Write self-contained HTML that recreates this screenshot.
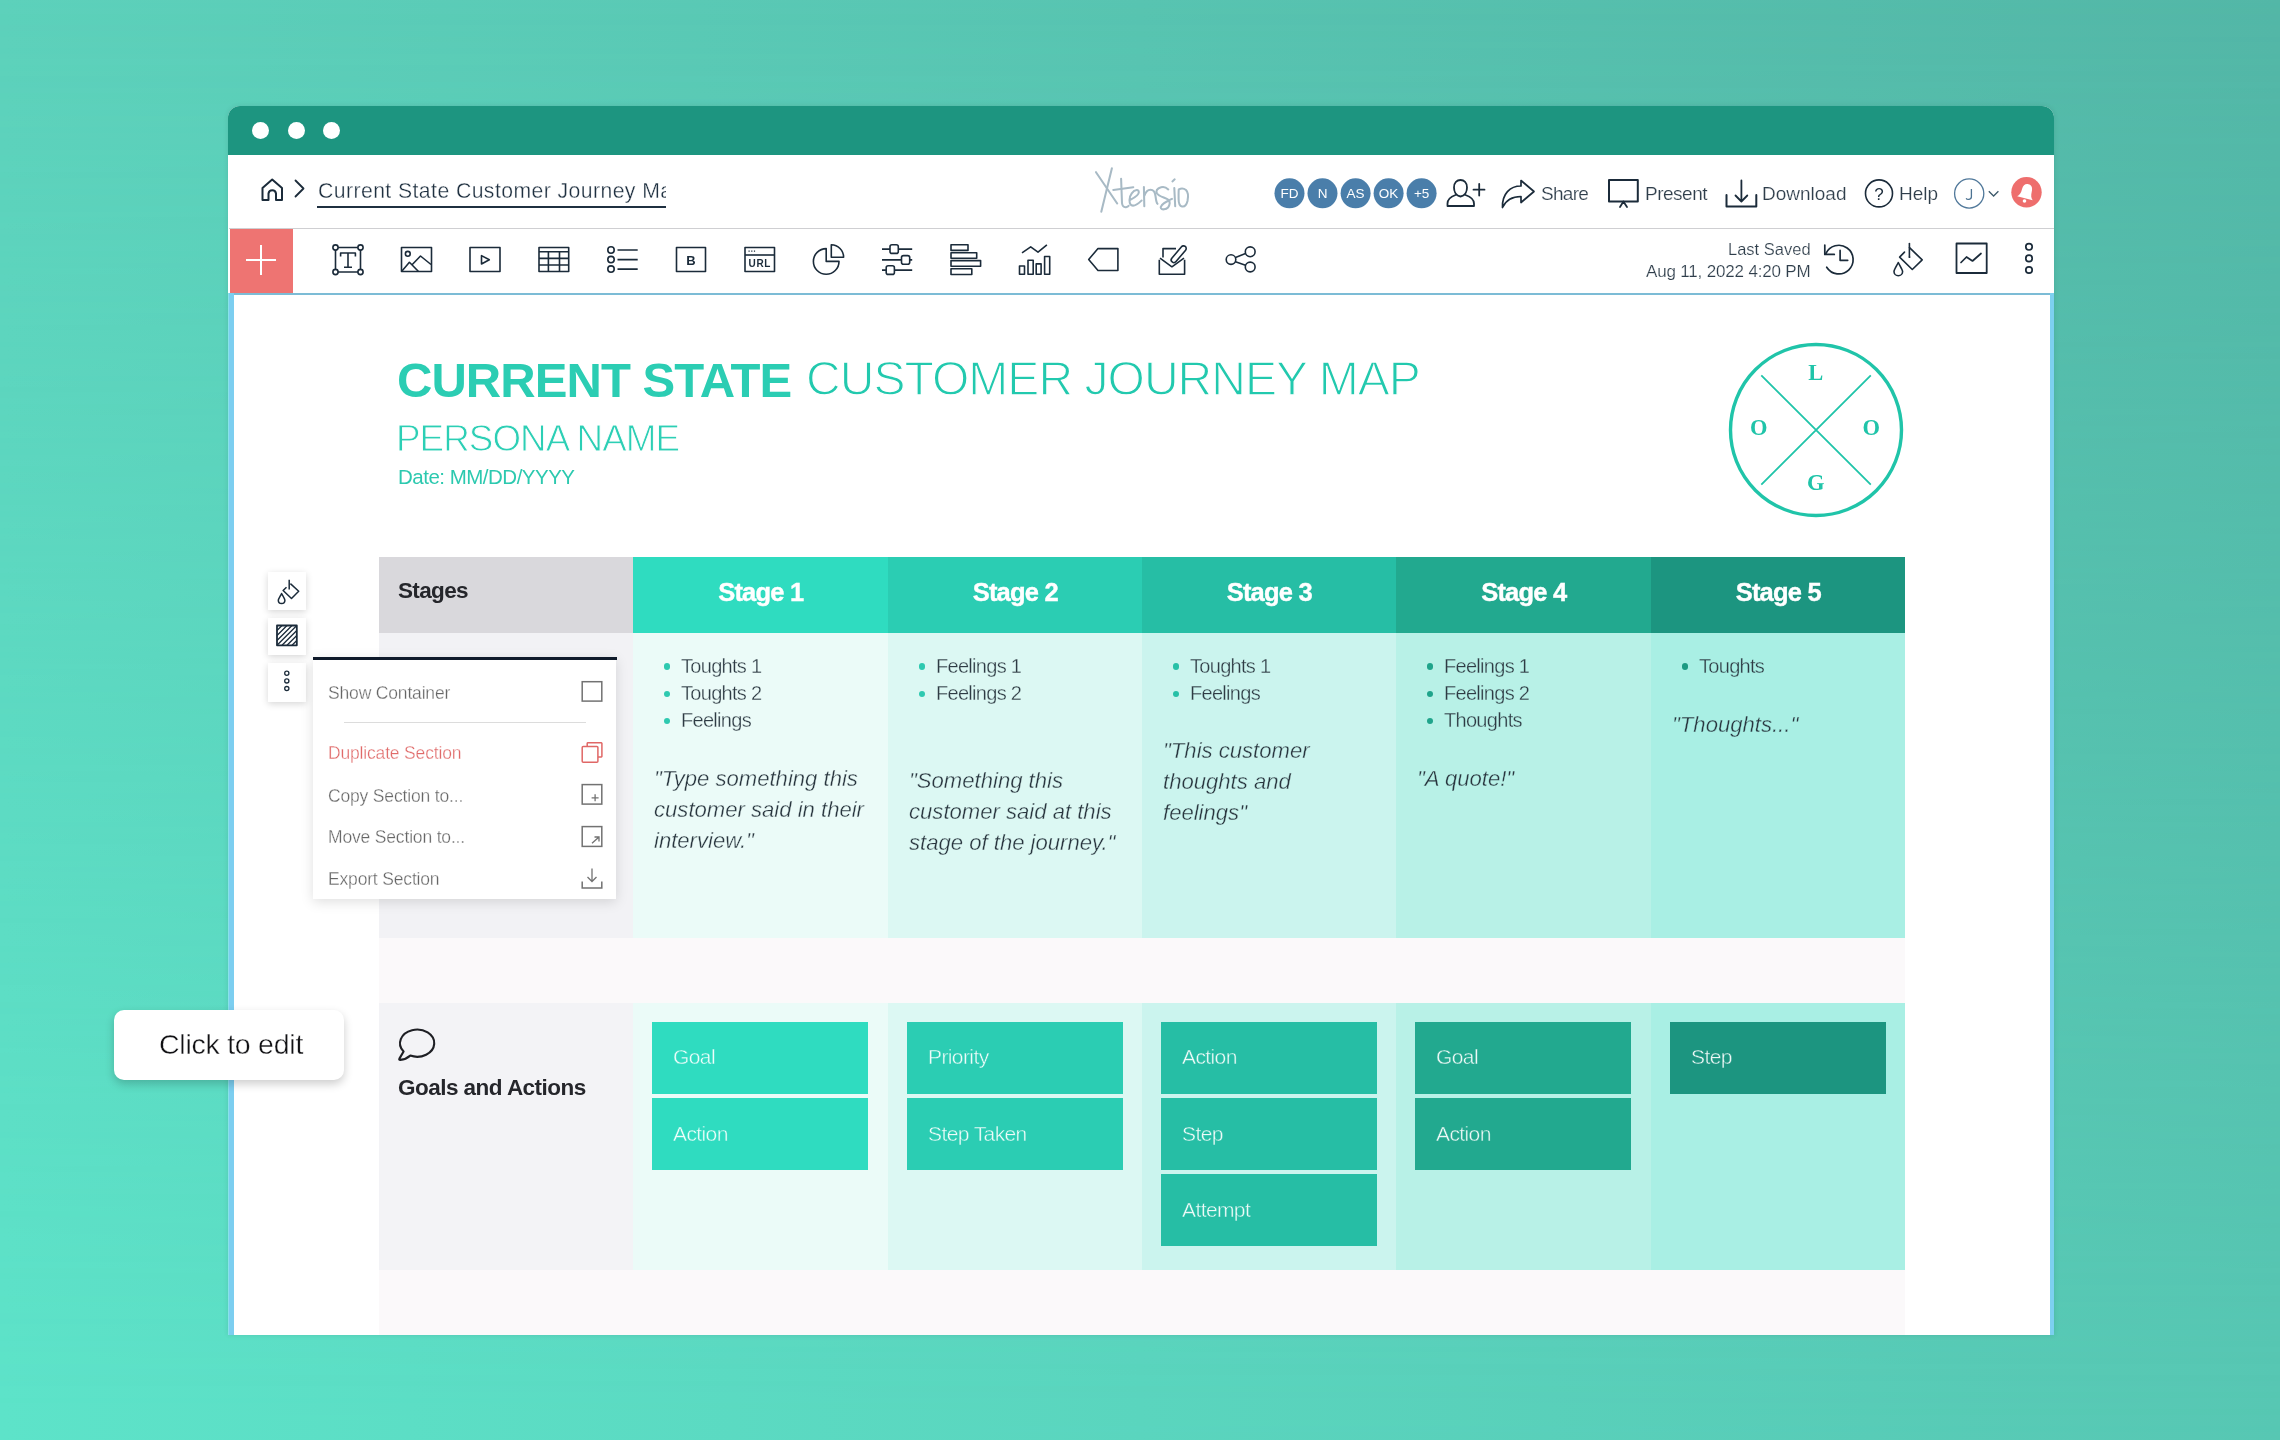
<!DOCTYPE html>
<html><head><meta charset="utf-8">
<style>
*{box-sizing:border-box;margin:0;padding:0}
html,body{width:2280px;height:1440px;overflow:hidden}
body{position:relative;font-family:"Liberation Sans",sans-serif;
background:linear-gradient(to right,#5dd1bb,#53b7a7);}
#bg2{left:0;top:0;width:2280px;height:1440px;background:linear-gradient(to right,#5de3c9,#57c7b3);-webkit-mask-image:linear-gradient(to bottom,transparent,#000);mask-image:linear-gradient(to bottom,transparent,#000)}
.a{position:absolute}
.t{position:absolute;white-space:nowrap;line-height:1;will-change:transform}
.qt{will-change:transform}
svg{position:absolute;overflow:visible;will-change:transform}
#win{left:228px;top:106px;width:1826px;height:1229px;background:#fff;border-radius:12px 12px 0 0;box-shadow:0 0 5px rgba(0,60,50,.12)}
#titlebar{left:228px;top:106px;width:1826px;height:49px;background:#1d9580;border-radius:12px 12px 0 0}
.dot{position:absolute;width:17px;height:17px;border-radius:50%;background:#fff;top:122px}
</style></head>
<body>
<div id="bg2" class="a"></div>
<div id="win" class="a"></div>
<div id="titlebar" class="a"></div>
<div class="dot" style="left:251.5px"></div>
<div class="dot" style="left:287.5px"></div>
<div class="dot" style="left:323px"></div>

<!-- header row -->
<div class="a" style="left:229px;top:228px;width:1825px;height:1px;background:#cfcfd2"></div>

<!-- toolbar -->
<div class="a" style="left:230px;top:229px;width:63px;height:64px;background:#ee7472"></div>
<div class="a" style="left:246px;top:259px;width:30px;height:2px;background:#fff"></div>
<div class="a" style="left:260px;top:245px;width:2px;height:30px;background:#fff"></div>

<!-- canvas selection border -->
<div class="a" style="left:229px;top:293px;width:1825px;height:2px;background:#7cbcd6"></div>
<div class="a" style="left:228px;top:293px;width:6px;height:1042px;background:linear-gradient(to right,#88e2ea 0,#88e2ea 1.2px,#7ccef0 1.2px)"></div>
<div class="a" style="left:2050px;top:293px;width:4px;height:1042px;background:#7dd0f0"></div>


<!-- breadcrumb -->
<svg style="left:0;top:0" width="2280" height="1440" viewBox="0 0 2280 1440">
<g fill="none" stroke="#1b2b3a" stroke-width="2" stroke-linejoin="round" stroke-linecap="round">
 <path d="M262.5 200 V188 L272.2 179.5 L282 188 V200 H276 V193.5 A3.8 3.8 0 0 0 268.5 193.5 V200 Z"/>
 <path d="M295.5 180.5 L303.5 188.5 L295.5 196.5" stroke-width="1.8"/>
</g>
</svg>
<div class="a" style="left:317px;top:174px;width:349px;height:30px;overflow:hidden">
 <div class="t" style="left:0.5px;top:5.75px;font-size:21.2px;letter-spacing:0.43px;color:#1f3040;-webkit-text-stroke:0.3px #fff">Current State Customer Journey Map</div>
</div>
<div class="a" style="left:317px;top:206.2px;width:349px;height:1.6px;background:#1f3040"></div>


<!-- Xtensio logo -->
<svg style="left:0;top:0" width="2280" height="1440" viewBox="0 0 2280 1440">
<g fill="none" stroke="#a8bac5" stroke-width="2.05" stroke-linecap="round" stroke-linejoin="round">
 <path d="M1096 172.2 L1117.2 203.5"/>
 <path d="M1111.9 168.3 L1101.3 211.8"/>
 <path d="M1121.1 178.7 L1122 203 C1122.3 206 1124 207.4 1126 207.2 C1127.5 207 1128.3 206.4 1128.7 205.8"/>
 <path d="M1113.3 189.9 L1133.3 187.2"/>
 <path d="M1130.3 199.8 C1134 198 1138.8 195 1138.8 192.3 C1138.8 190.5 1137.8 190 1136.8 190.1 C1133 190.5 1129.5 195 1129.5 200 C1129.5 204 1131 205.6 1133 205.6 C1136.5 205.6 1139.5 202.5 1141.6 200.5"/>
 <path d="M1143.9 187 L1144.3 206.3 M1144.3 196 C1145.5 192 1148 189.7 1150.5 189.7 C1153.5 189.7 1155 192 1155.5 196 C1156 200 1156.5 203 1157.5 203.8"/>
 <path d="M1168.3 189.4 C1166 187.2 1163 186.6 1161 187.3 C1157 188.5 1155.5 191 1157 193.5 C1159 196.5 1165 197.5 1168 199.5 C1170.5 201.5 1170 205 1168 207.5 C1166 209.6 1162 210 1161 208.3 C1160 206.5 1163 203.5 1166 202 C1168.5 200.7 1170.5 199.7 1172 198.9"/>
 <path d="M1172.4 181.4 L1174.7 179.3" stroke-width="2"/>
 <path d="M1174.3 188 L1175.2 206.3"/>
 <path d="M1178.8 189.5 C1181 188.3 1184 188.5 1186 190 C1188 192 1188.3 197 1187.5 201 C1186.5 205 1184.5 207 1182 206.5 C1179.5 206 1178.6 203 1178.6 199 C1178.6 195 1178.5 191 1178.8 189.5"/>
</g>
<!-- avatars -->
<g fill="#4a7eaa">
 <circle cx="1289.5" cy="193.3" r="15"/>
 <circle cx="1322.5" cy="193.3" r="15"/>
 <circle cx="1355.6" cy="193.3" r="15"/>
 <circle cx="1388.6" cy="193.3" r="15"/>
 <circle cx="1421.6" cy="193.3" r="15"/>
</g>
<g fill="#fff" font-family="Liberation Sans" font-size="13.5" text-anchor="middle">
 <text x="1289.5" y="198.2">FD</text>
 <text x="1322.5" y="198.2">N</text>
 <text x="1355.6" y="198.2">AS</text>
 <text x="1388.6" y="198.2">OK</text>
 <text x="1421.6" y="198.2">+5</text>
</g>
<g fill="none" stroke="#1b2b3a" stroke-width="1.8" stroke-linecap="round" stroke-linejoin="round">
 <!-- add user -->
 <path d="M1460.5 196.5 C1455 195.5 1454 190 1454 187.5 C1454 182.5 1457 180 1460.5 180 C1464 180 1467 182.5 1467 187.5 C1467 190 1466 195.5 1460.5 196.5"/>
 <path d="M1455.5 195 C1450 197 1447.5 200.5 1447.5 203.5 V206 H1474 V203.5 C1474 200.5 1471 197 1465.5 195"/>
 <path d="M1479.2 184 V195.5 M1473.5 189.7 H1484.5"/>
 <!-- share arrow -->
 <path d="M1521 180.5 L1534 191.5 L1521 202.5 V196.5 C1512 196.5 1506 200 1502.5 207.5 C1502 194 1510 186 1521 186 Z" stroke-width="1.7"/>
 <!-- present -->
 <rect x="1609" y="180" width="28.8" height="21.5" stroke-width="2"/>
 <path d="M1620 207 L1623.4 201.5 L1627 207" stroke-width="1.8"/>
 <!-- download -->
 <path d="M1726.5 195 V206.5 H1756.3 V195" stroke-width="2"/>
 <path d="M1741.4 180.5 V201 M1735.5 195.5 L1741.4 201.5 L1747.3 195.5" stroke-width="1.8"/>
 <!-- help -->
 <circle cx="1879" cy="193.4" r="13.5" stroke-width="1.6"/>
</g>
<text x="1879" y="199.5" font-family="Liberation Sans" font-size="17" fill="#1b2b3a" text-anchor="middle">?</text>
<!-- J -->
<circle cx="1969.2" cy="193.5" r="14.6" fill="none" stroke="#50789a" stroke-width="1.3"/>
<path d="M1971.4 189 V196.8 C1971.4 199.8 1967 200.2 1966.2 198.2" fill="none" stroke="#4d7392" stroke-width="1.3"/>
<path d="M1988.8 191.2 L1993.6 196 L1998.4 191.2" fill="none" stroke="#3e5a6c" stroke-width="1.3"/>
<!-- bell -->
<circle cx="2026.5" cy="192.3" r="15.2" fill="#ee6e6d"/>
<path d="M2018.5 198.5 C2020.5 197 2021.5 194.5 2021.5 190 C2021.5 186 2023.5 184 2026.5 184 C2029.5 184 2031.5 186 2031.5 190 C2031.5 194.5 2032.5 197 2034.5 198.5 Z" fill="#fff" transform="rotate(14 2026.5 192)"/>
<circle cx="2024.5" cy="201" r="1.8" fill="#fff"/>
</svg>
<div class="t" style="left:1540.5px;top:184.2px;font-size:19px;letter-spacing:-0.7px;color:#2f3e4b;-webkit-text-stroke:0.2px #fff">Share</div>
<div class="t" style="left:1645px;top:184.2px;font-size:19px;letter-spacing:-0.5px;color:#2f3e4b;-webkit-text-stroke:0.2px #fff">Present</div>
<div class="t" style="left:1761.5px;top:184.2px;font-size:19px;color:#2f3e4b;-webkit-text-stroke:0.2px #fff">Download</div>
<div class="t" style="left:1899px;top:184.2px;font-size:19px;color:#2f3e4b;-webkit-text-stroke:0.2px #fff">Help</div>


<!-- toolbar icons -->
<svg style="left:0;top:0" width="2280" height="1440" viewBox="0 0 2280 1440">
<g fill="none" stroke="#1b2b3a" stroke-width="1.6" stroke-linejoin="round">
 <!-- T -->
 <rect x="335.5" y="247.5" width="25" height="24.5"/>
 <g fill="#fff" stroke-width="1.6"><circle cx="335.5" cy="247.5" r="2.6"/><circle cx="360.5" cy="247.5" r="2.6"/><circle cx="335.5" cy="272" r="2.6"/><circle cx="360.5" cy="272" r="2.6"/></g>
 <path d="M340.6 256.5 V253 H355.4 V256.5 M348 253 V267.2 M344 267.2 H352" stroke-width="1.6"/>
 <!-- image -->
 <rect x="401.5" y="247.5" width="30" height="24"/>
 <circle cx="407.8" cy="253.8" r="2.4" stroke-width="1.6"/>
 <path d="M402 271 L409.4 262.3 L418.5 271.5 M412.3 264.5 L420.5 256 L431 264.5" stroke-width="1.6"/>
 <!-- video -->
 <rect x="470" y="247.5" width="30" height="24"/>
 <path d="M481.5 255.6 V264 L489.3 259.8 Z" stroke-width="1.6"/>
 <!-- table -->
 <rect x="539" y="247.5" width="29.7" height="24"/>
 <path d="M539 251.8 H568.7 M539 258.4 H568.7 M539 265 H568.7 M548.4 251.8 V271.5 M559.5 251.8 V271.5" stroke-width="1.6"/>
 <!-- list -->
 <circle cx="611" cy="250" r="3.2" stroke-width="1.6"/><circle cx="611" cy="259.6" r="3.2" stroke-width="1.6"/><circle cx="611" cy="269.1" r="3.2" stroke-width="1.6"/>
 <path d="M617.5 250 H637.7 M617.5 259.6 H637.7 M617.5 269.1 H637.7" stroke-width="1.6"/>
 <!-- B -->
 <rect x="676.5" y="247.5" width="29" height="24"/>
 <!-- URL -->
 <rect x="745" y="247.5" width="29.5" height="24"/>
 <path d="M745 255 H774.5" stroke-width="1.6"/>
 <path d="M748.5 251.2 H749.7 M751.2 251.2 H752.4 M753.9 251.2 H755.1" stroke-width="1.2"/>
 <!-- pie -->
 <path d="M826.2 248.6 A12.8 12.8 0 1 0 839 261.4 H826.2 Z" stroke-width="1.6"/>
 <path d="M831.3 244.8 A12.4 12.4 0 0 1 843.6 257.2 H831.3 Z" stroke-width="1.6"/>
 <!-- sliders -->
 <path d="M882 249.1 H890 M898.3 249.1 H912.2 M882 259.9 H901.5 M909.7 259.9 H912.2 M882 270.2 H886.2 M894.4 270.2 H912.2" stroke-width="1.75"/>
 <rect x="890" y="244.8" width="8.3" height="8.6" rx="2" stroke-width="1.6"/>
 <rect x="901.5" y="255.6" width="8.2" height="8.6" rx="2" stroke-width="1.6"/>
 <rect x="886.2" y="265.8" width="8.2" height="8.6" rx="2" stroke-width="1.6"/>
 <!-- bars -->
 <rect x="951" y="244.8" width="17" height="5.6" stroke-width="1.6"/>
 <rect x="951" y="252.8" width="25.7" height="5.5" stroke-width="1.6"/>
 <rect x="951" y="260.6" width="29.6" height="5.7" stroke-width="1.6"/>
 <rect x="951" y="268.8" width="20.8" height="5.7" stroke-width="1.6"/>
 <!-- chart -->
 <rect x="1019.5" y="266" width="5" height="8.3" stroke-width="1.6"/>
 <rect x="1028" y="260.2" width="5.2" height="14.1" stroke-width="1.6"/>
 <rect x="1036.2" y="263.9" width="4.9" height="10.4" stroke-width="1.6"/>
 <rect x="1044.6" y="256.5" width="5.1" height="17.8" stroke-width="1.6"/>
 <path d="M1022 252.8 L1030.7 246.9 L1038 252.2 L1046.9 244.8" stroke-width="1.6"/>
 <!-- tag -->
 <path d="M1088.7 259.6 L1098 248.6 H1117.9 V270.5 H1098 Z"/>
 <!-- email -->
 <path d="M1163 257.5 V248.6 H1176"/>
 <path d="M1159.3 259.8 V274.2 H1184.6 V259.8"/>
 <path d="M1160 258.2 L1171.9 266.8 L1184 258.2" stroke-width="1.6"/>
 <path d="M1171.8 258.2 L1181.5 246.8 A2.6 2.6 0 0 1 1185.6 250.2 L1176 261.6 A2.6 2.6 0 0 1 1171.8 258.2 Z" stroke-width="1.6"/>
 <!-- share -->
 <circle cx="1231" cy="259.6" r="4.8" stroke-width="1.6"/>
 <circle cx="1250.2" cy="251.8" r="4.9" stroke-width="1.6"/>
 <circle cx="1250.2" cy="267" r="4.9" stroke-width="1.6"/>
 <path d="M1235.5 257.6 L1245.5 253.6 M1235.5 261.8 L1245.5 265.2" stroke-width="1.6"/>
</g>
<text x="691" y="264.8" font-family="Liberation Sans" font-weight="bold" font-size="13" fill="#1b2b3a" text-anchor="middle">B</text>
<text x="759.8" y="267.4" font-family="Liberation Sans" font-weight="bold" font-size="10" fill="#1b2b3a" text-anchor="middle" letter-spacing="0.6">URL</text>
</svg>


<!-- right toolbar -->
<div class="t" style="right:469.5px;top:240.9px;font-size:16.5px;color:#2f3e4b;-webkit-text-stroke:0.2px #fff">Last Saved</div>
<div class="t" style="right:469.5px;top:262.5px;font-size:17px;letter-spacing:-0.17px;color:#2f3e4b;-webkit-text-stroke:0.2px #fff">Aug 11, 2022 4:20 PM</div>
<svg style="left:0;top:0" width="2280" height="1440" viewBox="0 0 2280 1440">
<g fill="none" stroke="#1b2b3a" stroke-width="1.8" stroke-linejoin="round" stroke-linecap="round">
 <!-- history -->
 <path d="M1826.7 267.2 A14.3 14.3 0 1 0 1825.8 253.7" stroke-width="1.7"/>
 <path d="M1824.8 245 V254.4 H1834.3" stroke-width="1.7"/>
 <path d="M1840.1 250.4 V260.3 H1847.7" stroke-width="1.7"/>
 <!-- paint bucket -->
 <path d="M1904.5 252.1 L1899.6 257.1 L1912.3 269.5 L1922.2 259.9 L1909.5 247.6" stroke-width="1.6"/>
 <path d="M1909.4 243.5 V257" stroke-width="1.6"/>
 <circle cx="1909.5" cy="257.2" r="0.9" fill="#1b2b3a" stroke="none"/>
 <path d="M1898.3 262.5 C1896.5 266 1894 270 1894 271.5 A4.3 4.3 0 0 0 1902.6 271.5 C1902.6 270 1900 266 1898.3 262.5 Z" stroke-width="1.6"/>
 <!-- chart box -->
 <rect x="1956.5" y="243.5" width="30.2" height="29.5" stroke-width="1.8"/>
 <path d="M1961 262.5 L1966.5 257 L1972.5 261 L1981 253.5" stroke-width="1.7"/>
 <!-- dots -->
 <circle cx="2029" cy="246.8" r="3.2" stroke-width="1.7"/>
 <circle cx="2029" cy="258.4" r="3.2" stroke-width="1.7"/>
 <circle cx="2029" cy="270" r="3.2" stroke-width="1.7"/>
</g>
</svg>

<!-- ===== CANVAS ===== -->
<div class="t" style="left:397px;top:356.0px;font-size:49px;font-weight:bold;letter-spacing:-0.95px;color:#2bcdb3">CURRENT STATE</div>
<div class="t" style="left:805.5px;top:355.4px;font-size:48px;letter-spacing:-0.96px;color:#22c9ae;-webkit-text-stroke:1.3px #fff">CUSTOMER JOURNEY MAP</div>
<div class="t" style="left:396px;top:421.1px;font-size:36.8px;letter-spacing:-0.95px;color:#2ccfb5;-webkit-text-stroke:0.9px #fff">PERSONA NAME</div>
<div class="t" style="left:398px;top:466.6px;font-size:20.5px;letter-spacing:-0.5px;color:#2cc9af">Date: MM/DD/YYYY</div>
<svg style="left:0;top:0" width="2280" height="1440" viewBox="0 0 2280 1440">
<circle cx="1816" cy="430" r="85.5" fill="none" stroke="#20c4a9" stroke-width="3.4"/>
<path d="M1761.3 375.3 L1870.8 484.7 M1870.8 375.3 L1761.3 484.7" stroke="#20c4a9" stroke-width="1.8"/>
<g font-family="Liberation Serif" font-weight="bold" font-size="22.5" fill="#20c4a9" text-anchor="middle">
<text x="1815.8" y="379.5">L</text><text x="1758.8" y="434.5">O</text><text x="1871.3" y="434.5">O</text><text x="1815.8" y="490">G</text>
</g></svg>
<div class="a" style="left:379px;top:557px;width:254px;height:76px;background:#d9d8dc"></div>
<div class="a" style="left:379px;top:633px;width:254px;height:305px;background:#f2f2f5"></div>
<div class="a" style="left:379px;top:938px;width:1526px;height:64.5px;background:#fbf9fa"></div>
<div class="a" style="left:379px;top:1002.5px;width:254px;height:267px;background:#f3f3f6"></div>
<div class="a" style="left:379px;top:1269.5px;width:1526px;height:65.5px;background:#fbf9fa"></div>
<div class="a" style="left:633px;top:557px;width:255px;height:76px;background:#2fdcc0"></div>
<div class="a" style="left:633px;top:633px;width:255px;height:305px;background:#ebfbf8"></div>
<div class="a" style="left:633px;top:1002.5px;width:255px;height:267px;background:#ebfbf8"></div>
<div class="a" style="left:888px;top:557px;width:254px;height:76px;background:#2bcdb3"></div>
<div class="a" style="left:888px;top:633px;width:254px;height:305px;background:#dcf8f3"></div>
<div class="a" style="left:888px;top:1002.5px;width:254px;height:267px;background:#dcf8f3"></div>
<div class="a" style="left:1142px;top:557px;width:254px;height:76px;background:#26bea5"></div>
<div class="a" style="left:1142px;top:633px;width:254px;height:305px;background:#cbf4ee"></div>
<div class="a" style="left:1142px;top:1002.5px;width:254px;height:267px;background:#cbf4ee"></div>
<div class="a" style="left:1396px;top:557px;width:255px;height:76px;background:#22a98f"></div>
<div class="a" style="left:1396px;top:633px;width:255px;height:305px;background:#b8f1e7"></div>
<div class="a" style="left:1396px;top:1002.5px;width:255px;height:267px;background:#b8f1e7"></div>
<div class="a" style="left:1651px;top:557px;width:254px;height:76px;background:#1c9580"></div>
<div class="a" style="left:1651px;top:633px;width:254px;height:305px;background:#a9efe4"></div>
<div class="a" style="left:1651px;top:1002.5px;width:254px;height:267px;background:#a9efe4"></div>
<div class="t" style="left:398px;top:580.0px;font-size:22.5px;font-weight:bold;letter-spacing:-0.64px;color:#25262b">Stages</div>
<div class="t" style="left:633px;width:255px;text-align:center;top:579.7px;font-size:25.5px;font-weight:bold;letter-spacing:-0.8px;text-indent:0.5px;color:#fff;-webkit-text-stroke:0.4px #fff">Stage 1</div>
<div class="t" style="left:888px;width:254px;text-align:center;top:579.7px;font-size:25.5px;font-weight:bold;letter-spacing:-0.8px;text-indent:0.5px;color:#fff;-webkit-text-stroke:0.4px #fff">Stage 2</div>
<div class="t" style="left:1142px;width:254px;text-align:center;top:579.7px;font-size:25.5px;font-weight:bold;letter-spacing:-0.8px;text-indent:0.5px;color:#fff;-webkit-text-stroke:0.4px #fff">Stage 3</div>
<div class="t" style="left:1396px;width:255px;text-align:center;top:579.7px;font-size:25.5px;font-weight:bold;letter-spacing:-0.8px;text-indent:0.5px;color:#fff;-webkit-text-stroke:0.4px #fff">Stage 4</div>
<div class="t" style="left:1651px;width:254px;text-align:center;top:579.7px;font-size:25.5px;font-weight:bold;letter-spacing:-0.8px;text-indent:0.5px;color:#fff;-webkit-text-stroke:0.4px #fff">Stage 5</div>
<div class="a" style="left:663.7px;top:663.4px;width:6.6px;height:6.6px;border-radius:50%;background:#2ec9b0"></div>
<div class="t bt" style="left:680.5px;top:655.8px;font-size:20px;letter-spacing:-0.7px;color:#2e3b44;-webkit-text-stroke:0.3px #ebfbf8">Toughts 1</div>
<div class="a" style="left:663.7px;top:690.6px;width:6.6px;height:6.6px;border-radius:50%;background:#2ec9b0"></div>
<div class="t bt" style="left:680.5px;top:683.0px;font-size:20px;letter-spacing:-0.7px;color:#2e3b44;-webkit-text-stroke:0.3px #ebfbf8">Toughts 2</div>
<div class="a" style="left:663.7px;top:717.8px;width:6.6px;height:6.6px;border-radius:50%;background:#2ec9b0"></div>
<div class="t bt" style="left:680.5px;top:710.2px;font-size:20px;letter-spacing:-0.7px;color:#2e3b44;-webkit-text-stroke:0.3px #ebfbf8">Feelings</div>
<div class="a" style="left:918.7px;top:663.4px;width:6.6px;height:6.6px;border-radius:50%;background:#2ec9b0"></div>
<div class="t bt" style="left:935.5px;top:655.8px;font-size:20px;letter-spacing:-0.7px;color:#2e3b44;-webkit-text-stroke:0.3px #dcf8f3">Feelings 1</div>
<div class="a" style="left:918.7px;top:690.6px;width:6.6px;height:6.6px;border-radius:50%;background:#2ec9b0"></div>
<div class="t bt" style="left:935.5px;top:683.0px;font-size:20px;letter-spacing:-0.7px;color:#2e3b44;-webkit-text-stroke:0.3px #dcf8f3">Feelings 2</div>
<div class="a" style="left:1172.7px;top:663.4px;width:6.6px;height:6.6px;border-radius:50%;background:#27c0a7"></div>
<div class="t bt" style="left:1189.5px;top:655.8px;font-size:20px;letter-spacing:-0.7px;color:#2e3b44;-webkit-text-stroke:0.3px #cbf4ee">Toughts 1</div>
<div class="a" style="left:1172.7px;top:690.6px;width:6.6px;height:6.6px;border-radius:50%;background:#27c0a7"></div>
<div class="t bt" style="left:1189.5px;top:683.0px;font-size:20px;letter-spacing:-0.7px;color:#2e3b44;-webkit-text-stroke:0.3px #cbf4ee">Feelings</div>
<div class="a" style="left:1426.7px;top:663.4px;width:6.6px;height:6.6px;border-radius:50%;background:#1fa48b"></div>
<div class="t bt" style="left:1443.5px;top:655.8px;font-size:20px;letter-spacing:-0.7px;color:#2e3b44;-webkit-text-stroke:0.3px #b8f1e7">Feelings 1</div>
<div class="a" style="left:1426.7px;top:690.6px;width:6.6px;height:6.6px;border-radius:50%;background:#1fa48b"></div>
<div class="t bt" style="left:1443.5px;top:683.0px;font-size:20px;letter-spacing:-0.7px;color:#2e3b44;-webkit-text-stroke:0.3px #b8f1e7">Feelings 2</div>
<div class="a" style="left:1426.7px;top:717.8px;width:6.6px;height:6.6px;border-radius:50%;background:#1fa48b"></div>
<div class="t bt" style="left:1443.5px;top:710.2px;font-size:20px;letter-spacing:-0.7px;color:#2e3b44;-webkit-text-stroke:0.3px #b8f1e7">Thoughts</div>
<div class="a" style="left:1681.7px;top:663.4px;width:6.6px;height:6.6px;border-radius:50%;background:#1c9a82"></div>
<div class="t bt" style="left:1698.5px;top:655.8px;font-size:20px;letter-spacing:-0.7px;color:#2e3b44;-webkit-text-stroke:0.3px #a9efe4">Toughts</div>
<div class="a qt" style="left:654.0px;top:764.4px;font-size:22.1px;line-height:30.75px;font-style:italic;color:#28353e;-webkit-text-stroke:0.35px #ebfbf8;white-space:nowrap">"Type something this<br>customer said in their<br>interview."</div>
<div class="a qt" style="left:909.0px;top:765.9px;font-size:22.1px;line-height:30.75px;font-style:italic;color:#28353e;-webkit-text-stroke:0.35px #dcf8f3;white-space:nowrap">"Something this<br>customer said at this<br>stage of the journey."</div>
<div class="a qt" style="left:1163.0px;top:736.4px;font-size:22.1px;line-height:30.75px;font-style:italic;color:#28353e;-webkit-text-stroke:0.35px #cbf4ee;white-space:nowrap">"This customer<br>thoughts and<br>feelings"</div>
<div class="a qt" style="left:1417.0px;top:763.9px;font-size:22.1px;line-height:30.75px;font-style:italic;color:#28353e;-webkit-text-stroke:0.35px #b8f1e7;white-space:nowrap">"A quote!"</div>
<div class="a qt" style="left:1672.0px;top:709.6px;font-size:22.1px;line-height:30.75px;font-style:italic;color:#28353e;-webkit-text-stroke:0.35px #a9efe4;white-space:nowrap">"Thoughts..."</div>
<svg style="left:0;top:0" width="2280" height="1440" viewBox="0 0 2280 1440">
<path d="M403.6 1051.45 L399.4 1058.6 Q398.7 1060 400.4 1059.9 C404 1059.6 407.5 1058 410.3 1055.6 A17.1 13.6 0 1 0 403.6 1051.45 Z" fill="none" stroke="#1e1f24" stroke-width="2.1" stroke-linejoin="round"/>
</svg>
<div class="t" style="left:398px;top:1076.6px;font-size:22.5px;font-weight:bold;letter-spacing:-0.53px;color:#25262b">Goals and Actions</div>
<div class="a" style="left:652.3px;top:1022px;width:216px;height:71.8px;background:#2fdcc0"></div>
<div class="t gt" style="left:672.5px;top:1046.4px;font-size:21px;letter-spacing:-0.6px;color:rgba(255,255,255,.92);-webkit-text-stroke:0.4px #2fdcc0">Goal</div>
<div class="a" style="left:652.3px;top:1098.2px;width:216px;height:71.8px;background:#2fdcc0"></div>
<div class="t gt" style="left:672.5px;top:1122.6px;font-size:21px;letter-spacing:-0.6px;color:rgba(255,255,255,.92);-webkit-text-stroke:0.4px #2fdcc0">Action</div>
<div class="a" style="left:907.3px;top:1022px;width:216px;height:71.8px;background:#2bcdb3"></div>
<div class="t gt" style="left:927.5px;top:1046.4px;font-size:21px;letter-spacing:-0.6px;color:rgba(255,255,255,.92);-webkit-text-stroke:0.4px #2bcdb3">Priority</div>
<div class="a" style="left:907.3px;top:1098.2px;width:216px;height:71.8px;background:#2bcdb3"></div>
<div class="t gt" style="left:927.5px;top:1122.6px;font-size:21px;letter-spacing:-0.6px;color:rgba(255,255,255,.92);-webkit-text-stroke:0.4px #2bcdb3">Step Taken</div>
<div class="a" style="left:1161.3px;top:1022px;width:216px;height:71.8px;background:#26bea5"></div>
<div class="t gt" style="left:1181.5px;top:1046.4px;font-size:21px;letter-spacing:-0.6px;color:rgba(255,255,255,.92);-webkit-text-stroke:0.4px #26bea5">Action</div>
<div class="a" style="left:1161.3px;top:1098.2px;width:216px;height:71.8px;background:#26bea5"></div>
<div class="t gt" style="left:1181.5px;top:1122.6px;font-size:21px;letter-spacing:-0.6px;color:rgba(255,255,255,.92);-webkit-text-stroke:0.4px #26bea5">Step</div>
<div class="a" style="left:1161.3px;top:1174.4px;width:216px;height:71.8px;background:#26bea5"></div>
<div class="t gt" style="left:1181.5px;top:1198.8px;font-size:21px;letter-spacing:-0.6px;color:rgba(255,255,255,.92);-webkit-text-stroke:0.4px #26bea5">Attempt</div>
<div class="a" style="left:1415.3px;top:1022px;width:216px;height:71.8px;background:#22a98f"></div>
<div class="t gt" style="left:1435.5px;top:1046.4px;font-size:21px;letter-spacing:-0.6px;color:rgba(255,255,255,.92);-webkit-text-stroke:0.4px #22a98f">Goal</div>
<div class="a" style="left:1415.3px;top:1098.2px;width:216px;height:71.8px;background:#22a98f"></div>
<div class="t gt" style="left:1435.5px;top:1122.6px;font-size:21px;letter-spacing:-0.6px;color:rgba(255,255,255,.92);-webkit-text-stroke:0.4px #22a98f">Action</div>
<div class="a" style="left:1670.3px;top:1022px;width:216px;height:71.8px;background:#1c9580"></div>
<div class="t gt" style="left:1690.5px;top:1046.4px;font-size:21px;letter-spacing:-0.6px;color:rgba(255,255,255,.92);-webkit-text-stroke:0.4px #1c9580">Step</div>
<!-- ===== END CANVAS ===== -->
<!-- ===== OVERLAYS ===== -->
<div class="a" style="left:267.7px;top:572px;width:38px;height:37.8px;background:#fff;box-shadow:0 2px 7px rgba(0,0,0,.16)"></div>
<div class="a" style="left:267.7px;top:617.8px;width:38px;height:37.5px;background:#fff;box-shadow:0 2px 7px rgba(0,0,0,.16)"></div>
<div class="a" style="left:267.7px;top:663.1px;width:38px;height:38.6px;background:#fff;box-shadow:0 2px 7px rgba(0,0,0,.16)"></div>
<svg style="left:0;top:0" width="2280" height="1440" viewBox="0 0 2280 1440">
<g fill="none" stroke="#1b2b3a" stroke-width="1.5" stroke-linejoin="round">
 <path d="M286.5 587.2 L283.1 590.5 L291.5 598.5 L298.7 591.3 L290.4 583.6"/>
 <path d="M289.2 579.8 V589.5"/>
 <path d="M281.6 593.5 C280.3 596 278.3 599 278.3 600.2 A3.3 3.3 0 0 0 284.9 600.2 C284.9 599 283 596 281.6 593.5 Z"/>
 <rect x="277" y="625.5" width="19.8" height="19.8" stroke-width="1.8"/>
 <path d="M277 630.5 L282 625.5 M277 635.5 L287 625.5 M277 640.5 L292 625.5 M277 645.3 L296.8 625.5 M282 645.3 L296.8 630.5 M287 645.3 L296.8 635.5 M292 645.3 L296.8 640.5" stroke-width="1.3"/>
 <circle cx="286.8" cy="673.3" r="2.1" stroke-width="1.3"/>
 <circle cx="286.8" cy="680.9" r="2.1" stroke-width="1.3"/>
 <circle cx="286.8" cy="688.6" r="2.1" stroke-width="1.3"/>
</g></svg>
<div class="a" style="left:312.6px;top:657px;width:303.4px;height:242px;background:#fff;box-shadow:0 3px 12px rgba(0,0,0,.13)"></div>
<div class="a" style="left:312.6px;top:657px;width:304.4px;height:2.7px;background:#0f1a2a"></div>
<div class="a" style="left:343.9px;top:721.5px;width:241.7px;height:1px;background:#dcdcdc"></div>
<div class="t" style="left:327.5px;top:684.7px;font-size:17.5px;letter-spacing:-0.17px;color:#666;-webkit-text-stroke:0.3px #fff">Show Container</div>
<div class="t" style="left:327.5px;top:745.4px;font-size:17.5px;letter-spacing:-0.17px;color:#e06a69;-webkit-text-stroke:0.3px #fff">Duplicate Section</div>
<div class="t" style="left:327.5px;top:787.6px;font-size:17.5px;letter-spacing:-0.17px;color:#666;-webkit-text-stroke:0.3px #fff">Copy Section to...</div>
<div class="t" style="left:327.5px;top:829.3px;font-size:17.5px;letter-spacing:-0.17px;color:#666;-webkit-text-stroke:0.3px #fff">Move Section to...</div>
<div class="t" style="left:327.5px;top:871.3px;font-size:17.5px;letter-spacing:-0.17px;color:#666;-webkit-text-stroke:0.3px #fff">Export Section</div>
<svg style="left:0;top:0" width="2280" height="1440" viewBox="0 0 2280 1440">
<g fill="none" stroke="#727272" stroke-width="1.5">
 <rect x="582.2" y="681.7" width="19.6" height="19.4"/>
 <rect x="582.2" y="784.6" width="19.6" height="19.5"/>
 <path d="M595.1 794.3 V801.3 M591.6 797.8 H598.6" stroke-width="1.3"/>
 <rect x="582.2" y="826.6" width="19.6" height="19.8"/>
 <path d="M592 843.3 L599 837 M594.5 837 H599 V841.5" stroke-width="1.3"/>
 <path d="M582.2 881.5 V888 H601.8 V881.5"/>
 <path d="M592 868.5 V881.5 M587.5 877 L592 881.5 L596.5 877" stroke-width="1.3"/>
</g>
<g fill="none" stroke="#e06766" stroke-width="1.5">
 <path d="M587.2 746.3 V743.3 A0.7 0.7 0 0 1 587.9 742.7 H601.3 A0.7 0.7 0 0 1 601.9 743.3 V756.5 A0.7 0.7 0 0 1 601.3 757.1 H598"/>
 <rect x="582.2" y="746.5" width="15.7" height="15.8" rx="1"/>
</g></svg>
<div class="a" style="left:114px;top:1010px;width:230px;height:70px;background:#fff;border-radius:10px;box-shadow:0 4px 10px rgba(0,0,0,.2)"></div>
<div class="t" style="left:159px;top:1030.2px;font-size:28.5px;letter-spacing:-0.25px;color:#111114;-webkit-text-stroke:0.4px #fff">Click to edit</div>
<!-- ===== END OVERLAYS ===== -->
</body></html>
